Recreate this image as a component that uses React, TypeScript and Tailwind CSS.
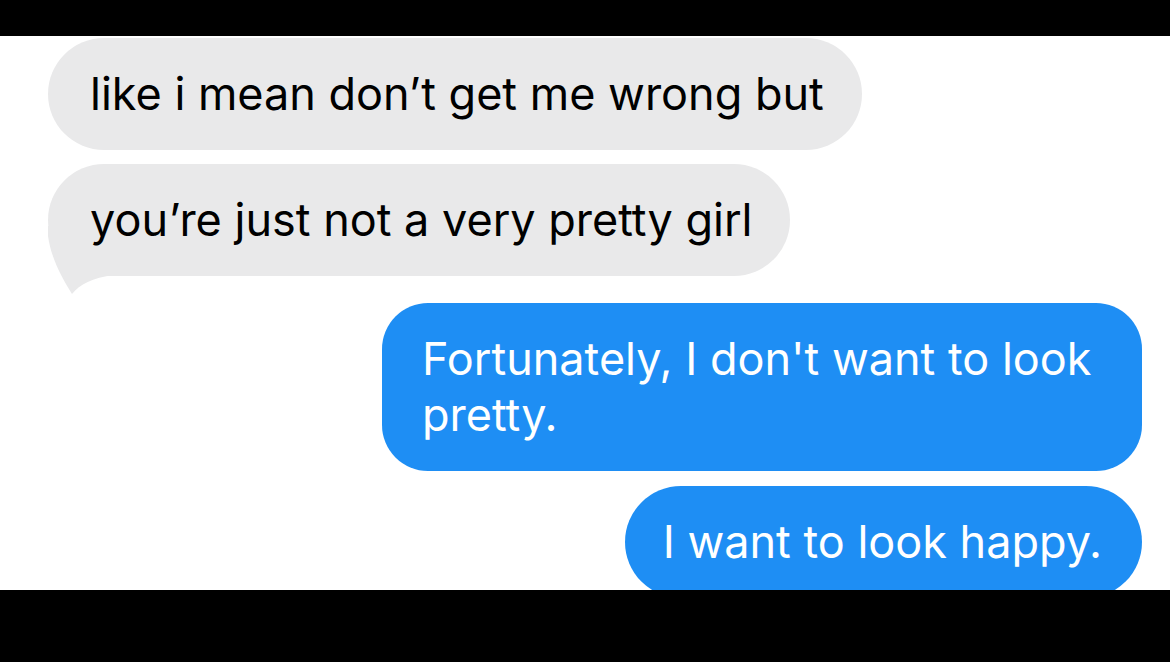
import React from 'react';

const font = { fontFamily: 'Inter, "Liberation Sans", Arial, sans-serif' };

const GrayBubble: React.FC<{ text: string; tail?: boolean; className?: string }> = ({ text, tail, className }) => (
    <div className={`relative self-start rounded-[56px] bg-[#e9e9ea] pl-[42px] pr-[38px] py-[28px] text-[45px] leading-[56px] text-black ${className ?? ''}`}>
        {tail && (
            <svg className="absolute left-0 bottom-[-20px] h-[70px] w-[70px]" viewBox="0 0 70 70">
                <path d="M0 0 L0 10 C3 32 14 52 24 68 C32 58 44 52 66 49 L66 0 Z" fill="#e9e9ea" />
            </svg>
        )}
        <span className="relative">{text}</span>
    </div>
);

const BlueBubble: React.FC<{ children: React.ReactNode; className?: string }> = ({ children, className }) => (
    <div className={`self-end bg-[#1e8ef4] py-[28px] text-[45px] leading-[56px] text-white ${className ?? ''}`}>
        {children}
    </div>
);

const App: React.FC = () => {
    return (
        <div className="flex h-[662px] w-[1170px] flex-col bg-black" style={font}>
            <div className="h-[36px] shrink-0 bg-black" />

            {/* Conversation */}
            <div className="flex h-[554px] shrink-0 flex-col overflow-hidden bg-white pl-[48px] pr-[28px] pt-[2px]">
                <GrayBubble text="like i mean don’t get me wrong but" />
                <GrayBubble text="you’re just not a very pretty girl" tail className="mt-[14px]" />

                <BlueBubble className="mt-[27px] w-[760px] rounded-[46px] pl-[40px] pr-[30px]">
                    Fortunately, I don't want to look
                    <br />
                    pretty.
                </BlueBubble>
                <BlueBubble className="mt-[15px] shrink-0 rounded-[56px] pl-[38px] pr-[40px]">
                    I want to look happy.
                </BlueBubble>
            </div>

            <div className="flex-1 bg-black" />
        </div>
    );
};

export default App;
